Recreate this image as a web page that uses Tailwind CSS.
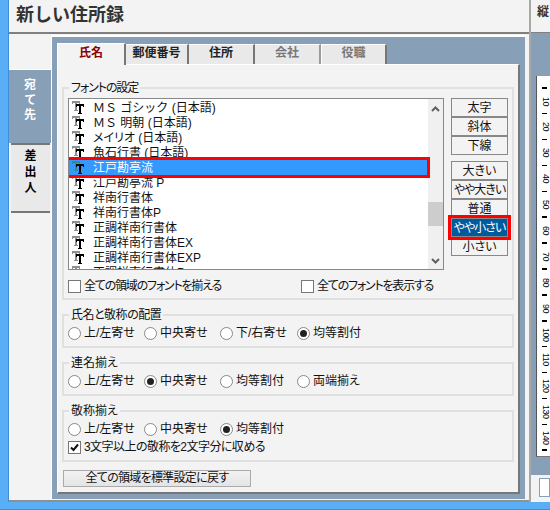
<!DOCTYPE html>
<html lang="ja">
<head>
<meta charset="UTF-8">
<title>新しい住所録</title>
<script src="https://cdn.jsdelivr.net/npm/@tailwindcss/browser@4"></script>
</head>
<body class="[font-family:'Liberation_Sans','Noto_Sans_CJK_JP',sans-serif] [font-feature-settings:'palt'] text-[12px] leading-[14px] text-[#111]">
<svg width="0" height="0" class="absolute">
  <defs>
    <path id="t" d="M0 0h8v3h-1v-1h-2v7h1v1h-4v-1h1v-7h-2v1h-1z"/>
    <symbol id="tt" viewBox="0 0 13 14">
      <use href="#t" x="0" y="0" fill="#909090"/>
      <use href="#t" x="4" y="3" fill="#000"/>
    </symbol>
    <symbol id="tt-sel" viewBox="0 0 13 14">
      <use href="#t" x="0" y="0" fill="#2a8f8f"/>
      <use href="#t" x="4" y="3" fill="#000"/>
    </symbol>
  </defs>
</svg>
<div class="w-[550px] h-[510px] overflow-hidden flex flex-col bg-[#5aaef5]">
  <div class="h-[502px] flex pl-[8px] bg-[#5aaef5]">
    <!-- main column -->
    <div class="w-[523px] h-[502px] flex flex-col bg-[#f3f3f3] border-l border-[#3f8fd8]">
      <div class="h-[34px] pl-[7px] border-b-2 border-[#808080] flex items-center shrink-0">
        <h1 class="text-[18px] leading-[22px] font-bold text-[#333] mb-[3px] [font-feature-settings:normal]">新しい住所録</h1>
      </div>
      <div class="flex flex-1 pt-[1px] border-b-2 border-[#909090]">
        <!-- side tabs -->
        <div class="w-[42px] shrink-0 pt-[34px] flex flex-col items-start">
          <div class="w-[42px] h-[74px] bg-[#87a0b8] border-t border-white text-white flex flex-col items-center pt-[8px] leading-[15px] font-bold">
            <span>宛</span><span>て</span><span>先</span>
          </div>
          <div class="w-[39px] h-[70px] ml-[2px] bg-[#e9e9e9] border-t-2 border-b-2 border-[#777] flex flex-col items-center pt-[3px] leading-[16px] font-bold text-black">
            <span>差</span><span>出</span><span>人</span>
          </div>
        </div>
        <!-- panel -->
        <div class="w-[474px] h-[464px] shrink-0 bg-[#87a0b8] border-t-2 border-l border-white">
          <div class="h-[27px] pl-[5px] flex items-end font-bold">
            <div class="w-[69px] h-[22px] pb-[3px] bg-[#f3f3f3] border-t border-l border-white border-r-2 border-r-[#777] flex items-center justify-center text-[#8b0000] relative top-[1px]">氏名</div>
            <div class="w-[63px] h-[20px] pb-[3px] bg-[#e9e9e9] border-t border-white border-r-2 border-r-[#777] flex items-center justify-center text-[#222]">郵便番号</div>
            <div class="w-[66px] h-[20px] pb-[3px] bg-[#e9e9e9] border-t border-white border-r-2 border-r-[#777] flex items-center justify-center text-[#222]">住所</div>
            <div class="w-[66px] h-[20px] pb-[3px] bg-[#e9e9e9] border-t border-white border-r-2 border-r-[#999] flex items-center justify-center text-[#777]">会社</div>
            <div class="w-[66px] h-[20px] pb-[3px] bg-[#e9e9e9] border-t border-l border-white border-r-2 border-r-[#777] flex items-center justify-center text-[#777]">役職</div>
          </div>
          <!-- card -->
          <div class="w-[463px] h-[430px] ml-[5px] bg-[#f3f3f3] border-t border-l border-white border-r-2 border-b-2 border-r-[#777] border-b-[#777] pl-[4px] pr-[5px] pt-[16px]">
            <fieldset class="w-[452px] h-[219px] border-2 border-[#e0e0e0] px-[4px]">
              <legend class="ml-[1px] px-[2px] h-[14px] tracking-[-1.1px]">フォントの設定</legend>
              <div class="flex mt-[3px]">
                <div class="w-[376px] h-[172px] bg-white border border-[#888] flex overflow-hidden">
                  <ul class="w-[358px] pt-[1px] shrink-0">
                    <li class="h-[15px] flex items-center pl-[3px] gap-[8px] [font-feature-settings:normal]"><svg class="w-[13px] h-[14px] shrink-0"><use href="#tt"/></svg><span>ＭＳ ゴシック (日本語)</span></li>
                    <li class="h-[15px] flex items-center pl-[3px] gap-[8px] [font-feature-settings:normal]"><svg class="w-[13px] h-[14px] shrink-0"><use href="#tt"/></svg><span>ＭＳ 明朝 (日本語)</span></li>
                    <li class="h-[15px] flex items-center pl-[3px] gap-[8px]"><svg class="w-[13px] h-[14px] shrink-0"><use href="#tt"/></svg><span>メイリオ (日本語)</span></li>
                    <li class="h-[15px] flex items-center pl-[3px] gap-[8px]"><svg class="w-[13px] h-[14px] shrink-0"><use href="#tt"/></svg><span>魚石行書 (日本語)</span></li>
                    <li class="h-[15px] flex items-center pl-[3px] gap-[8px] bg-[#3399ff] text-white outline-[3px] outline-[#ff0000] relative z-10"><svg class="w-[13px] h-[14px] shrink-0"><use href="#tt-sel"/></svg><span>江戸勘亭流</span></li>
                    <li class="h-[15px] flex items-center pl-[3px] gap-[8px]"><svg class="w-[13px] h-[14px] shrink-0"><use href="#tt"/></svg><span>江戸勘亭流 P</span></li>
                    <li class="h-[15px] flex items-center pl-[3px] gap-[8px]"><svg class="w-[13px] h-[14px] shrink-0"><use href="#tt"/></svg><span>祥南行書体</span></li>
                    <li class="h-[15px] flex items-center pl-[3px] gap-[8px]"><svg class="w-[13px] h-[14px] shrink-0"><use href="#tt"/></svg><span>祥南行書体P</span></li>
                    <li class="h-[15px] flex items-center pl-[3px] gap-[8px]"><svg class="w-[13px] h-[14px] shrink-0"><use href="#tt"/></svg><span>正調祥南行書体</span></li>
                    <li class="h-[15px] flex items-center pl-[3px] gap-[8px]"><svg class="w-[13px] h-[14px] shrink-0"><use href="#tt"/></svg><span>正調祥南行書体EX</span></li>
                    <li class="h-[15px] flex items-center pl-[3px] gap-[8px]"><svg class="w-[13px] h-[14px] shrink-0"><use href="#tt"/></svg><span>正調祥南行書体EXP</span></li>
                    <li class="h-[15px] flex items-center pl-[3px] gap-[8px]"><svg class="w-[13px] h-[14px] shrink-0"><use href="#tt"/></svg><span>正調祥南行書体P</span></li>
                  </ul>
                  <div class="w-[15px] ml-[1px] bg-[#f0f0f0] flex flex-col items-center pt-[7px]">
                    <svg width="9" height="6" viewBox="0 0 9 6" fill="none" stroke="#606060" stroke-width="2"><path d="M1 5l3.5-3.5L8 5"/></svg>
                    <div class="w-[15px] h-[24px] mt-[90px] bg-[#cdcdcd]"></div>
                    <svg class="mt-[32px]" width="9" height="6" viewBox="0 0 9 6" fill="none" stroke="#606060" stroke-width="2"><path d="M1 1l3.5 3.5L8 1"/></svg>
                  </div>
                </div>
                <div class="ml-[7px] w-[57px] flex flex-col whitespace-nowrap">
                  <div class="h-[19px] bg-[#f3f3f3] border border-[#888] flex items-center justify-center">太字</div>
                  <div class="h-[19px] bg-[#f3f3f3] border border-[#888] flex items-center justify-center">斜体</div>
                  <div class="h-[19px] bg-[#f3f3f3] border border-[#888] flex items-center justify-center">下線</div>
                  <div class="h-[19px] mt-[6px] bg-[#f3f3f3] border border-[#888] flex items-center justify-center">大きい</div>
                  <div class="h-[19px] bg-[#f3f3f3] border border-[#888] flex items-center justify-center tracking-[-1px]">やや大きい</div>
                  <div class="h-[19px] bg-[#f3f3f3] border border-[#888] flex items-center justify-center">普通</div>
                  <div class="h-[19px] bg-[#005a9e] text-white border border-[#888] flex items-center justify-center outline-[3px] outline-[#ff0000] relative z-10 tracking-[-1px]">やや小さい</div>
                  <div class="h-[19px] bg-[#f3f3f3] border border-[#888] flex items-center justify-center">小さい</div>
                </div>
              </div>
              <div class="flex mt-[9px] h-[14px] items-center whitespace-nowrap">
                <span class="w-[13px] h-[13px] bg-white border border-[#777] shrink-0"></span>
                <span class="ml-[3px] w-[217px] tracking-[-1.2px]">全ての領域のフォントを揃える</span>
                <span class="w-[13px] h-[13px] bg-white border border-[#777] shrink-0"></span>
                <span class="ml-[3px] tracking-[-1.2px]">全てのフォントを表示する</span>
              </div>
            </fieldset>
            <fieldset class="w-[452px] h-[40px] mt-[8px] border-2 border-[#e0e0e0] px-[4px]">
              <legend class="ml-[1px] px-[2px] h-[14px] tracking-[-0.5px]">氏名と敬称の配置</legend>
              <div class="flex mt-[4px]">
                <label class="w-[76px] flex items-center gap-[3px]"><span class="w-[13px] h-[13px] rounded-full bg-white border border-[#888]"></span>上/左寄せ</label>
                <label class="w-[76px] flex items-center gap-[3px]"><span class="w-[13px] h-[13px] rounded-full bg-white border border-[#888]"></span>中央寄せ</label>
                <label class="w-[77px] flex items-center gap-[3px]"><span class="w-[13px] h-[13px] rounded-full bg-white border border-[#888]"></span>下/右寄せ</label>
                <label class="flex items-center gap-[3px]"><span class="w-[13px] h-[13px] rounded-full bg-white border border-[#888] flex items-center justify-center"><span class="w-[7px] h-[7px] rounded-full bg-[#222]"></span></span>均等割付</label>
              </div>
            </fieldset>
            <fieldset class="w-[452px] h-[40px] mt-[8px] border-2 border-[#e0e0e0] px-[4px]">
              <legend class="ml-[1px] px-[2px] h-[14px]">連名揃え</legend>
              <div class="flex mt-[4px]">
                <label class="w-[76px] flex items-center gap-[3px]"><span class="w-[13px] h-[13px] rounded-full bg-white border border-[#888]"></span>上/左寄せ</label>
                <label class="w-[76px] flex items-center gap-[3px]"><span class="w-[13px] h-[13px] rounded-full bg-white border border-[#888] flex items-center justify-center"><span class="w-[7px] h-[7px] rounded-full bg-[#222]"></span></span>中央寄せ</label>
                <label class="w-[77px] flex items-center gap-[3px]"><span class="w-[13px] h-[13px] rounded-full bg-white border border-[#888]"></span>均等割付</label>
                <label class="flex items-center gap-[3px]"><span class="w-[13px] h-[13px] rounded-full bg-white border border-[#888]"></span>両端揃え</label>
              </div>
            </fieldset>
            <fieldset class="w-[452px] h-[58px] mt-[8px] border-2 border-[#e0e0e0] px-[4px]">
              <legend class="ml-[1px] px-[2px] h-[14px]">敬称揃え</legend>
              <div class="flex mt-[4px]">
                <label class="w-[76px] flex items-center gap-[3px]"><span class="w-[13px] h-[13px] rounded-full bg-white border border-[#888]"></span>上/左寄せ</label>
                <label class="w-[76px] flex items-center gap-[3px]"><span class="w-[13px] h-[13px] rounded-full bg-white border border-[#888]"></span>中央寄せ</label>
                <label class="w-[77px] flex items-center gap-[3px]"><span class="w-[13px] h-[13px] rounded-full bg-white border border-[#888] flex items-center justify-center"><span class="w-[7px] h-[7px] rounded-full bg-[#222]"></span></span>均等割付</label>
              </div>
              <div class="flex items-center gap-[3px] mt-[4px] tracking-[-0.55px]">
                <span class="w-[13px] h-[13px] bg-white border border-[#777] flex items-center justify-center"><svg width="9" height="9" viewBox="0 0 9 9" fill="none" stroke="#111" stroke-width="2"><path d="M1 4.5l2.5 2.5L8 1.5"/></svg></span>
                3文字以上の敬称を2文字分に収める
              </div>
            </fieldset>
            <button class="block w-[188px] h-[17px] mt-[8px] ml-[1px] bg-gradient-to-b from-[#f2f2f2] to-[#e4e4e4] border border-[#aaa] text-center leading-[15px] tracking-[-0.7px]">全ての領域を標準設定に戻す</button>
          </div>
        </div>
      </div>
    </div>
    <!-- preview column -->
    <div class="flex-1 h-[502px] bg-[#f3f3f3] border-l-2 border-[#a8a8a8] flex flex-col">
      <div class="h-[33px] pl-[6px] pt-[5px] border-b border-[#808080] font-bold text-[#333] shrink-0 overflow-hidden">縦</div>
      <div class="h-[442px] bg-[#87a0b8] pl-[5px] pt-[43px] shrink-0">
        <div class="h-[381px] bg-white border-l border-[#555] border-b border-b-[#777] pt-[11px] pl-[5px] flex flex-col text-[9px] leading-[9px] tracking-[-0.5px] text-black">
          <div class="h-[25.9px] shrink-0"><div class="w-[5px] h-[1.5px] bg-black"></div><div class="[writing-mode:vertical-rl] mt-[8px] -ml-[1px]">10</div></div>
          <div class="h-[25.9px] shrink-0"><div class="w-[5px] h-[1.5px] bg-black"></div><div class="[writing-mode:vertical-rl] mt-[8px] -ml-[1px]">20</div></div>
          <div class="h-[25.9px] shrink-0"><div class="w-[5px] h-[1.5px] bg-black"></div><div class="[writing-mode:vertical-rl] mt-[8px] -ml-[1px]">30</div></div>
          <div class="h-[25.9px] shrink-0"><div class="w-[5px] h-[1.5px] bg-black"></div><div class="[writing-mode:vertical-rl] mt-[8px] -ml-[1px]">40</div></div>
          <div class="h-[25.9px] shrink-0"><div class="w-[5px] h-[1.5px] bg-black"></div><div class="[writing-mode:vertical-rl] mt-[8px] -ml-[1px]">50</div></div>
          <div class="h-[25.9px] shrink-0"><div class="w-[5px] h-[1.5px] bg-black"></div><div class="[writing-mode:vertical-rl] mt-[8px] -ml-[1px]">60</div></div>
          <div class="h-[25.9px] shrink-0"><div class="w-[5px] h-[1.5px] bg-black"></div><div class="[writing-mode:vertical-rl] mt-[8px] -ml-[1px]">70</div></div>
          <div class="h-[25.9px] shrink-0"><div class="w-[5px] h-[1.5px] bg-black"></div><div class="[writing-mode:vertical-rl] mt-[8px] -ml-[1px]">80</div></div>
          <div class="h-[25.9px] shrink-0"><div class="w-[5px] h-[1.5px] bg-black"></div><div class="[writing-mode:vertical-rl] mt-[8px] -ml-[1px]">90</div></div>
          <div class="h-[25.9px] shrink-0"><div class="w-[5px] h-[1.5px] bg-black"></div><div class="[writing-mode:vertical-rl] mt-[6px] -ml-[1px]">100</div></div>
          <div class="h-[25.9px] shrink-0"><div class="w-[5px] h-[1.5px] bg-black"></div><div class="[writing-mode:vertical-rl] mt-[6px] -ml-[1px]">110</div></div>
          <div class="h-[25.9px] shrink-0"><div class="w-[5px] h-[1.5px] bg-black"></div><div class="[writing-mode:vertical-rl] mt-[6px] -ml-[1px]">120</div></div>
          <div class="h-[25.9px] shrink-0"><div class="w-[5px] h-[1.5px] bg-black"></div><div class="[writing-mode:vertical-rl] mt-[6px] -ml-[1px]">130</div></div>
          <div class="h-[25.9px] shrink-0"><div class="w-[5px] h-[1.5px] bg-black"></div><div class="[writing-mode:vertical-rl] mt-[6px] -ml-[1px]">140</div></div>
          <div class="w-[5px] h-[1.5px] bg-black shrink-0"></div>
        </div>
      </div>
      <div class="pl-[8px] pt-[3px]"><div class="h-[19px] bg-white border border-[#87a0b8]"></div></div>
    </div>
  </div>
  <div class="h-[8px] bg-[#5aaef5] border-b border-[#3f8fd8]"></div>
</div>
</body>
</html>
